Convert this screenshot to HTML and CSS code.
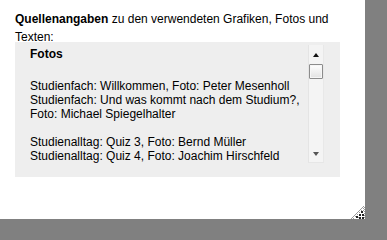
FILE: index.html
```html
<!DOCTYPE html>
<html lang="de">
<head>
<meta charset="utf-8">
<title>Quellenangaben</title>
<link rel="stylesheet" href="styles.css">
</head>
<body>
<div class="panel">
  <p class="intro"><b>Quellenangaben</b> zu den verwendeten Grafiken, Fotos und Texten:</p>
  <div class="box">
    <div class="scroller">
      <div class="content">
        <h3 class="heading">Fotos</h3>
        <p class="group">Studienfach: Willkommen, Foto: Peter Mesenholl<br>Studienfach: Und was kommt nach dem Studium?,<br>Foto: Michael Spiegelhalter</p>
        <p class="group">Studienalltag: Quiz 3, Foto: Bernd Müller<br>Studienalltag: Quiz 4, Foto: Joachim Hirschfeld</p>
      </div>
      <div class="scrollbar">
        <div class="arrow arrow-up"></div>
        <div class="thumb"></div>
        <div class="track-fill"></div>
        <div class="arrow arrow-down"></div>
      </div>
    </div>
  </div>
  <svg class="grip" width="14" height="14" viewBox="0 0 14 14">
    <g fill="#9a9a9a">
      <rect x="12" y="1" width="1" height="1"/>
      <rect x="10" y="3" width="1" height="1"/><rect x="12" y="3" width="1" height="1"/>
      <rect x="8" y="5" width="1" height="1"/><rect x="10" y="5" width="1" height="1"/><rect x="12" y="5" width="1" height="1"/>
      <rect x="6" y="7" width="1" height="1"/><rect x="8" y="7" width="1" height="1"/>
      <rect x="4" y="9" width="1" height="1"/><rect x="6" y="9" width="1" height="1"/>
      <rect x="2" y="11" width="1" height="1"/><rect x="4" y="11" width="1" height="1"/>
      <rect x="0" y="13" width="1" height="1"/><rect x="2" y="13" width="1" height="1"/>
      <rect x="11" y="2" width="1" height="1"/><rect x="13" y="2" width="1" height="1"/>
      <rect x="9" y="4" width="1" height="1"/><rect x="7" y="6" width="1" height="1"/>
      <rect x="5" y="8" width="1" height="1"/><rect x="3" y="10" width="1" height="1"/>
      <rect x="1" y="12" width="1" height="1"/><rect x="13" y="4" width="1" height="1"/>
      <rect x="13" y="6" width="1" height="1"/><rect x="13" y="8" width="1" height="1"/>
      <rect x="13" y="10" width="1" height="1"/><rect x="13" y="12" width="1" height="1"/>
      <rect x="9" y="12" width="1" height="1"/><rect x="7" y="12" width="1" height="1"/>
      <rect x="5" y="12" width="1" height="1"/>
    </g>
    <g fill="#222">
      <rect x="10" y="6" width="2" height="2"/>
      <rect x="8" y="9" width="2" height="2"/><rect x="11" y="9" width="2" height="2"/>
      <rect x="5" y="11" width="2" height="2"/><rect x="8" y="12" width="2" height="2"/><rect x="11" y="12" width="2" height="2"/>
    </g>
    <g fill="#fff">
      <rect x="9" y="7" width="1" height="1"/><rect x="10" y="8" width="1" height="1"/>
      <rect x="7" y="10" width="1" height="1"/><rect x="10" y="10" width="1" height="1"/>
      <rect x="4" y="12" width="1" height="1"/><rect x="7" y="13" width="1" height="1"/><rect x="10" y="13" width="1" height="1"/>
    </g>
  </svg>
</div>
</body>
</html>
```

FILE: styles.css
```css
html, body {
  margin: 0;
  padding: 0;
}
body {
  background: #808080;
  width: 387px;
  height: 239px;
  overflow: hidden;
  font-family: "Liberation Sans", Arial, sans-serif;
  color: #000;
}
.panel {
  position: relative;
  width: 365px;
  height: 219px;
  background: #fff;
  overflow: hidden;
}
.intro {
  margin: 0 0 -4px 0;
  padding: 10px 15px 0 15px;
  font-size: 12px;
  line-height: 18px;
}
.intro b {
  font-weight: bold;
}
.box {
  margin-left: 15px;
  width: 325px;
  height: 135px;
  background: #eeeeee;
  box-sizing: border-box;
  padding: 3px 16px 0 15px;
}
.scroller {
  display: flex;
  height: 118px;
}
.content {
  flex: 1;
  overflow: hidden;
  font-size: 12px;
  line-height: 14px;
  padding-top: 2px;
}
.heading {
  margin: 0 0 18px 0;
  font-size: 12px;
  line-height: 14px;
  font-weight: bold;
}
.group {
  margin: 0 0 14px 0;
}
.scrollbar {
  width: 16px;
  box-sizing: border-box;
  background: #f4f4f4;
  border-left: 1px solid #e4e4e4;
  border-right: 1px solid #e8e8e8;
  border-bottom: 1px solid #e6e6e6;
  display: flex;
  flex-direction: column;
  align-items: center;
}
.arrow {
  width: 0;
  height: 0;
  border-left: 3.5px solid transparent;
  border-right: 3.5px solid transparent;
}
.arrow-up {
  margin-top: 8px;
  border-bottom: 4px solid #111;
}
.arrow-down {
  margin-bottom: 6px;
  border-top: 4px solid #555;
}
.thumb {
  margin-top: 7px;
  width: 14px;
  height: 15px;
  box-sizing: border-box;
  border: 1px solid #8c8c8c;
  border-radius: 1px;
  background: linear-gradient(to bottom, #ffffff, #e2e2e2);
  box-shadow: inset 0 0 0 1px #f6f6f6;
}
.track-fill {
  flex: 1;
}
.grip {
  position: absolute;
  right: 0;
  bottom: 0;
  display: block;
}
```
